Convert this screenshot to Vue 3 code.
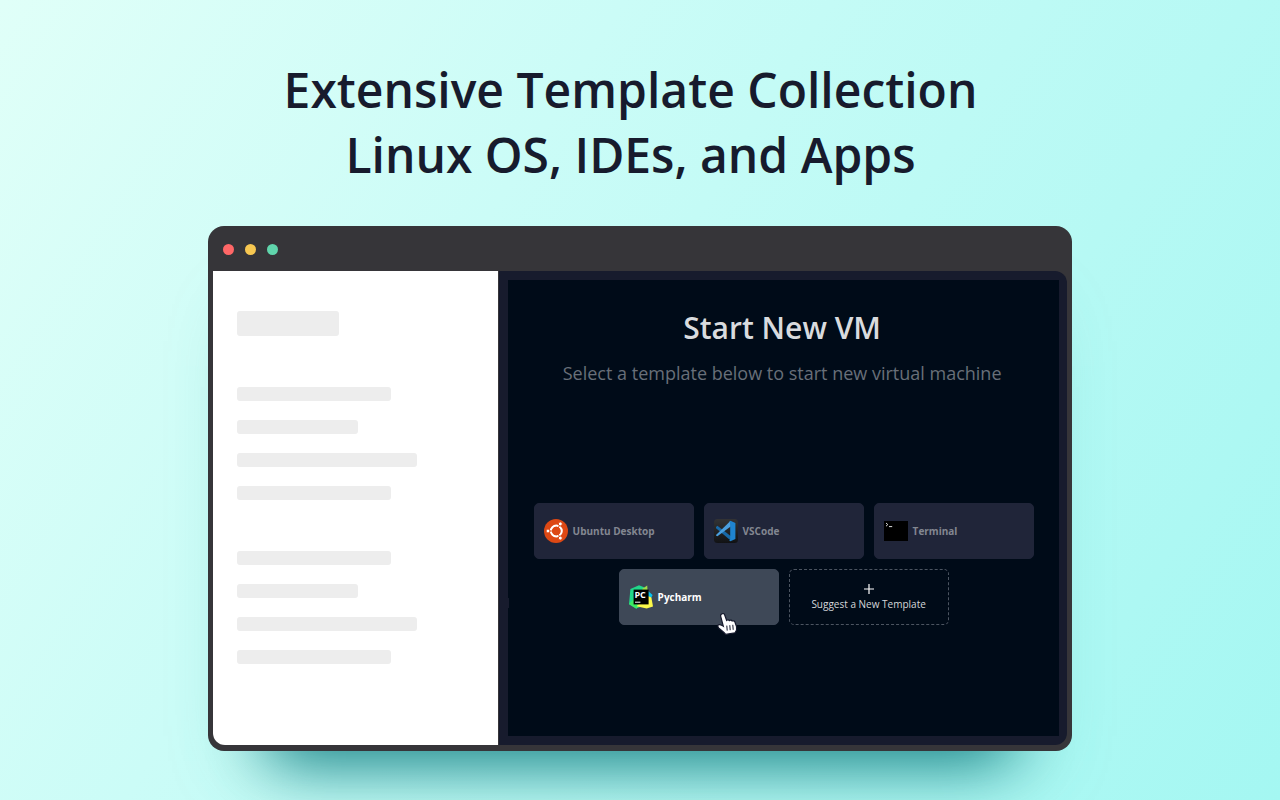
<template>
	<main class="page">
		<h1 class="headline">Extensive Template Collection<br />Linux OS, IDEs, and Apps</h1>

		<section class="window">
			<div class="titlebar">
				<span v-for="dot in dots" :key="dot" class="dot" :class="dot"></span>
			</div>

			<div class="content">
				<aside class="sidebar">
					<div class="skeleton-title"></div>
					<div v-for="group in 2" :key="group" class="skeleton-group">
						<div v-for="(size, i) in bars" :key="i" class="bar" :class="size"></div>
					</div>
				</aside>

				<div class="frame">
					<div class="panel">
						<h2>Start New VM</h2>
						<p class="lead">Select a template below to start new virtual machine</p>

						<div class="templates">
							<button v-for="item in templates" :key="item.id" type="button" class="card" :class="{ active: item.id === 'pycharm' }">
								<svg v-if="item.id === 'ubuntu'" class="icon" viewBox="0 0 24 24">
									<circle cx="12" cy="12" r="12" fill="#dd4814" />
									<circle cx="12.3" cy="12" r="5.4" fill="none" stroke="#fff" stroke-width="2.2" />
									<g stroke="#dd4814" stroke-width="1">
										<path d="M12.3 12H4M12.3 12l4.2-7.3M12.3 12l4.2 7.3" />
										<circle cx="4" cy="12" r="2" fill="#fff" />
										<circle cx="16.3" cy="4.9" r="2" fill="#fff" />
										<circle cx="16.3" cy="19.1" r="2" fill="#fff" />
									</g>
									<circle cx="12.3" cy="12" r="4.2" fill="#dd4814" />
								</svg>

								<svg v-else-if="item.id === 'vscode'" class="icon" viewBox="0 0 24 24">
									<defs>
										<linearGradient id="tile" x1="0" y1="0" x2="0" y2="1">
											<stop offset="0" stop-color="#333335" />
											<stop offset="1" stop-color="#111214" />
										</linearGradient>
									</defs>
									<rect width="24" height="24" rx="3.5" fill="url(#tile)" />
									<path d="M2 8 3.4 6.8 17 17.2v4.6L2 9.2z" fill="#1769a8" />
									<path d="M2 16 16.4 2 17 7.2 3.4 17.2 2 16.4z" fill="#4a9fdf" />
									<path d="M16.4 1.8 21.4 4v16l-5 2.2-1.2-.8 1-.8V3.4l-1-.6z" fill="#1f84cf" />
								</svg>

								<svg v-else-if="item.id === 'terminal'" class="icon" viewBox="0 0 24 24">
									<rect y="2" width="24" height="20" fill="#000" />
									<path d="m2 4 1.8 1.6L2 7.2M5 7.6h3.2" fill="none" stroke="#ddd" stroke-width="1" />
								</svg>

								<svg v-else class="icon" viewBox="0 0 24 24">
									<path d="M1.4 4 10 .2l5 2L20 12l-6 9-7 2.6-7-4.4z" fill="#21d789" />
									<path d="m0 19 5-5 6 6-3.6 3.8z" fill="#3bea62" />
									<path d="m13 4 5.2-3.6L18.6 6l-3 2z" fill="#9fdc4a" />
									<path d="m18 5 5.6 5-2.2 4.4-5-2z" fill="#07c3f2" />
									<path d="m19 11 3.4 1.6L24 21.6l-6.4 2-10-2.4L12 17z" fill="#fcf84a" />
									<rect x="4.6" y="4.6" width="15" height="14.8" fill="#000" />
									<path d="M6 17.2h5.4" stroke="#fff" stroke-width="1" />
									<text x="5.4" y="13" class="icon-text">PC</text>
								</svg>

								<span>{{ item.name }}</span>

								<svg v-if="item.id === 'pycharm'" class="pointer" viewBox="0 0 22 24">
									<path d="M5.2 1.8c1.2-.5 2.2.2 2.5 1.2l1.9 5.4c.8-.9 2.3-.7 2.8.2.9-.7 2.2-.5 2.7.4 1-.5 2.4 0 2.8 1l1.6 4.6c.6 2.1-.3 4.6-1.5 6.2l-9.3 1.6c-1.7-2.4-4.8-4-6.8-6.2C.6 14.7.5 13 1.8 12.6c1.6-.4 3 .7 4.5 1.6L3.7 4.3c-.3-1.1.3-2.1 1.5-2.5z" fill="#fff" stroke="#15192c" stroke-width="1.2" />
									<path d="m9.8 13.6.4 5M12.8 13.2l.4 5M15.8 12.8l.4 5" fill="none" stroke="#15192c" stroke-width="1" />
								</svg>
							</button>

							<button type="button" class="card suggest">
								<svg class="plus" viewBox="0 0 10 10">
									<path d="M5 0v10M0 5h10" stroke="#fff" stroke-width="1.2" />
								</svg>
								<span>Suggest a New Template</span>
							</button>
						</div>
					</div>
				</div>
			</div>
		</section>
	</main>
</template>

<script setup>
const dots = ['red', 'yellow', 'green']
const bars = ['medium', 'short', 'long', 'medium']

const templates = [
	{ id: 'ubuntu', name: 'Ubuntu Desktop' },
	{ id: 'vscode', name: 'VSCode' },
	{ id: 'terminal', name: 'Terminal' },
	{ id: 'pycharm', name: 'Pycharm' },
]
</script>

<style>
body {
	margin: 0;
}
</style>

<style scoped>
.page {
	display: flex;
	flex-direction: column;
	align-items: center;
	box-sizing: border-box;
	min-height: 100vh;
	padding: 57px 24px 49px;
	background: linear-gradient(122deg, #e0fff8 0%, #cbfcf7 35%, #b6f9f4 70%, #a4f7f2 100%);
	font-family: "Open Sans", "Noto Sans", sans-serif;
	overflow: hidden;
}

.headline {
	margin: 0 0 39px;
	padding-right: 19px;
	color: #171b2d;
	font-size: 48px;
	font-weight: 600;
	line-height: 65px;
	text-align: center;
}

.window {
	box-sizing: border-box;
	width: 100%;
	max-width: 864px;
	padding: 0 5px 6px;
	border-radius: 16px;
	background: #363539;
	box-shadow: 0 75px 60px -65px #1c8488, 0 50px 70px -40px rgba(60, 170, 165, 0.4);
}

.titlebar {
	display: flex;
	align-items: center;
	gap: 11px;
	height: 45px;
	padding: 1px 10px 0;
	box-sizing: border-box;
}

.dot {
	width: 11px;
	height: 11px;
	border-radius: 50%;
}

.dot.red {
	background: #ff6767;
}

.dot.yellow {
	background: #f7c751;
}

.dot.green {
	background: #60d5ac;
}

.content {
	display: flex;
	gap: 1px;
}

.sidebar {
	flex: none;
	box-sizing: border-box;
	width: 33.4%;
	padding: 40px 24px 81px;
	border-radius: 0 0 0 12px;
	background: #fff;
}

.skeleton-title {
	width: 102px;
	height: 25px;
	border-radius: 3px;
	background: #ededed;
}

.skeleton-group {
	display: flex;
	flex-direction: column;
	gap: 19px;
	margin-top: 51px;
}

.bar {
	height: 14px;
	border-radius: 3px;
	background: #ededed;
}

.bar.short {
	width: 51%;
}

.bar.medium {
	width: 65%;
}

.bar.long {
	width: 76%;
}

.frame {
	display: flex;
	flex: 1;
	box-sizing: border-box;
	padding: 9px 8px 9px 9px;
	border-radius: 0 12px 12px 0;
	background: #171b2d;
}

.panel {
	display: flex;
	position: relative;
	flex: 1;
	flex-direction: column;
	align-items: center;
	padding: 27px 20px 0;
	background: #000b18;
	text-align: center;
}

/* small handle on the panel's left edge */
.panel::before {
	content: "";
	position: absolute;
	top: 318px;
	left: 0;
	width: 1px;
	height: 10px;
	background: #171b2d;
}

h2,
.lead {
	padding-right: 3px;
}

h2 {
	margin: 0;
	color: #d9dbde;
	font-size: 30px;
	font-weight: 600;
	line-height: 42px;
}

.lead {
	margin: 11px 0 0;
	color: #686f79;
	font-size: 18px;
	line-height: 26px;
}

.templates {
	display: flex;
	flex-wrap: wrap;
	justify-content: center;
	gap: 10px;
	margin-top: 117px;
}

.card {
	display: flex;
	position: relative;
	align-items: center;
	gap: 5px;
	box-sizing: border-box;
	width: 160px;
	height: 56px;
	padding: 0 9px;
	border: 1px solid #202539;
	border-radius: 5px;
	background: #202539;
	color: #838791;
	font-family: inherit;
	font-size: 10px;
	font-weight: 700;
	line-height: 14px;
}

.card.active {
	border-color: #3e4857;
	background: #3e4857;
	color: #fff;
}

.card.suggest {
	flex-direction: column;
	justify-content: center;
	gap: 3px;
	border: 1px dashed #4c5561;
	background: transparent;
	color: #d5d7da;
	font-weight: 400;
}

.icon {
	width: 24px;
	height: 24px;
}

.icon-text {
	fill: #fff;
	font-size: 9px;
	font-weight: 700;
}

.plus {
	width: 10px;
	height: 10px;
}

.pointer {
	position: absolute;
	right: 39px;
	bottom: -12px;
	width: 22px;
	height: 24px;
}
</style>
